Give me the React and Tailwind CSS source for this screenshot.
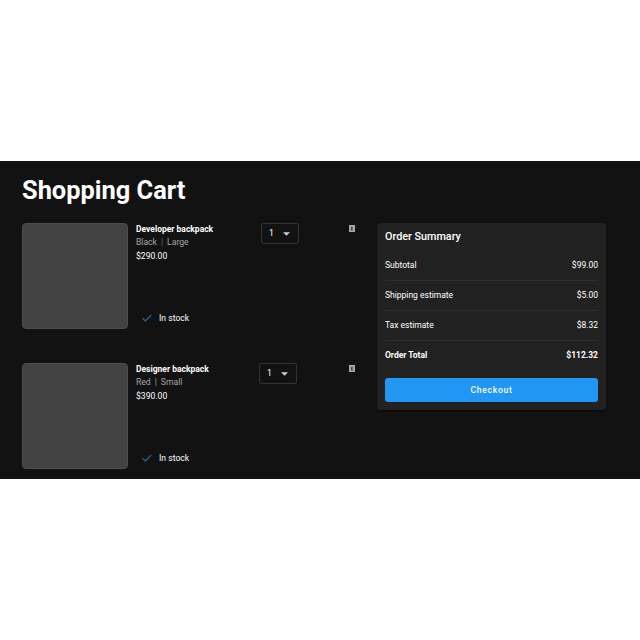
const items = [
  { name: 'Developer backpack', color: 'Black', size: 'Large', price: '$290.00', info: 'w-[125px]', divider: 'text-[#6a6c70]' },
  { name: 'Designer backpack', color: 'Red', size: 'Small', price: '$390.00', info: 'w-[123px]', divider: 'text-[#a5a5a5]' },
];

const charges = [
  { label: 'Subtotal', value: '$99.00' },
  { label: 'Shipping estimate', value: '$5.00' },
  { label: 'Tax estimate', value: '$8.32' },
];

function CheckIcon() {
  return (
    <svg viewBox="0 0 10 8" className="h-2 w-2.5" fill="none" stroke="#1f6fae" strokeWidth="1.1">
      <path d="M0.6 4.2 3.3 6.9 9.4 0.8" />
    </svg>
  );
}

function TrashIcon() {
  return (
    <svg viewBox="0 0 6 7" className="h-[7px] w-1.5">
      <path d="M0 0h6v7H0z" fill="#a5a5a5" />
      <path d="M2 2h2v3.5H2z" fill="#454545" />
      <path d="M3 2.6h1v2.2H3z" fill="#777" />
    </svg>
  );
}

function QuantitySelect() {
  return (
    <button className="flex h-[21px] w-[38px] items-center rounded-[2px] border border-[#333] pl-[7px] text-[8.6px] leading-none text-white">
      <span className="w-[14px] text-left">1</span>
      <svg viewBox="0 0 7 4" className="h-1 w-[7px]">
        <path d="M0 0.3h7L3.5 3.8z" fill="#cfcfcf" />
      </svg>
    </button>
  );
}

function CartItem({ item }) {
  return (
    <li className="flex h-[106px]">
      <div className="h-[106px] w-[106px] shrink-0 rounded-[4px] border border-[#4d4d4d] bg-[#424242]" />
      <div className={`${item.info} ml-2 flex shrink-0 flex-col`}>
        <h2 className="text-[8.5px] leading-[13px] font-bold whitespace-nowrap">{item.name}</h2>
        <p className="flex gap-1 text-[8.6px] leading-[13px] text-[#a5a5a5]">
          <span>{item.color}</span>
          <span className={item.divider}>|</span>
          <span>{item.size}</span>
        </p>
        <p className="text-[8.6px] leading-[14px]">{item.price}</p>
        <div className="mt-auto mb-1 flex items-center gap-[7px] pl-1.5 text-[8.6px] leading-[14px]">
          <CheckIcon />
          <span>In stock</span>
        </div>
      </div>
      <QuantitySelect />
      <button className="mt-0.5 ml-auto h-[7px] w-1.5">
        <TrashIcon />
      </button>
    </li>
  );
}

export default function App() {
  return (
    <div className="h-[640px] w-[640px] bg-white py-[161px] font-['Roboto',sans-serif] text-white">
      <main className="h-[318px] overflow-hidden bg-[#121212] px-[22px] pt-[14px]">
        <h1 className="h-[48px] text-[25.4px] leading-[30px] font-bold">Shopping Cart</h1>
        <div className="flex items-start gap-[22px]">
          <ul className="flex w-[333px] flex-col gap-[34px]">
            {items.map((item) => (
              <CartItem key={item.name} item={item} />
            ))}
          </ul>
          <section className="h-[187px] w-[229px] rounded-[3px] bg-[#212121] px-2 pt-[7px] shadow-[0_1px_2px_#080808]">
            <h2 className="text-[10.8px] leading-[14px] font-medium">Order Summary</h2>
            <dl className="mt-[7px] text-[8.5px]">
              {charges.map((charge) => (
                <div key={charge.label} className="flex h-[30px] items-center justify-between border-b border-[#2e2e2e]">
                  <dt>{charge.label}</dt>
                  <dd>{charge.value}</dd>
                </div>
              ))}
              <div className="flex h-[30px] items-center justify-between pb-0.5 font-bold">
                <dt>Order Total</dt>
                <dd>{'$112.32'}</dd>
              </div>
            </dl>
            <button className="mt-[7px] flex h-6 w-full items-center justify-center rounded-[3px] bg-[#2196f3] pt-px text-[8.6px] font-medium tracking-[0.7px]">
              Checkout
            </button>
          </section>
        </div>
      </main>
    </div>
  );
}
